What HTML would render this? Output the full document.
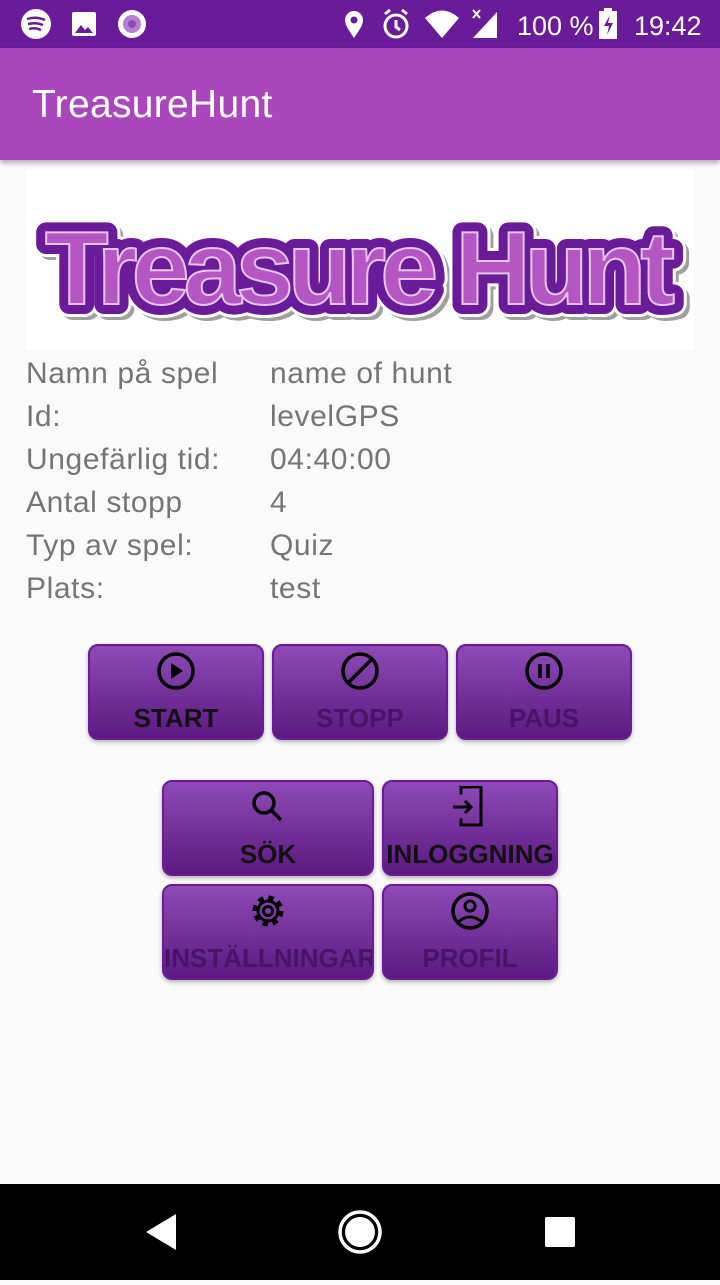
<!DOCTYPE html>
<html><head><meta charset="utf-8"><style>
*{margin:0;padding:0;box-sizing:border-box}
body{width:720px;height:1280px;background:#fafafa;font-family:"Liberation Sans",sans-serif;position:relative;overflow:hidden}
.sb{position:absolute;top:0;left:0;width:720px;height:48px;background:#6a1b9a;color:#fff}
.ab{position:absolute;top:48px;left:0;width:720px;height:112px;background:#ab47bc;box-shadow:0 3px 5px rgba(0,0,0,.3)}
.ab span{position:absolute;left:32px;top:35px;font-size:39px;color:#fff;letter-spacing:0.3px}
.logo{position:absolute;left:26px;top:170px;width:668px;height:180px;background:#fff}
.info{position:absolute;left:26px;top:352px;font-size:30px;color:#757575;line-height:43px;letter-spacing:0.6px;white-space:nowrap}
.info div{position:relative;height:43px}
.info .v{position:absolute;left:244px;top:0}
.btn{position:absolute;height:96px;border:2px solid #6a1b9a;border-radius:10px;background:linear-gradient(#8e4ab6,#5b1981);box-shadow:0 2px 4px rgba(0,0,0,.3);text-align:center;font-weight:bold;font-size:26px;overflow:hidden;white-space:nowrap}
.btn svg{position:absolute;left:50%;top:4px;margin-left:-21px}
.btn span{position:absolute;left:0;right:0;top:57px}
.dk{color:#111}.dm{color:#4a1466}
.nav{position:absolute;top:1184px;left:0;width:720px;height:96px;background:#000}
</style></head><body>
<div class="sb">
<svg width="720" height="48">
<circle cx="36" cy="24" r="15" fill="#fff"/><path d="M27 19q9-3 18 1M28 24q8-2 15 1M29 29q6-2 12 1" stroke="#6a1b9a" stroke-width="2.5" fill="none"/>
<rect x="72" y="12" width="24" height="24" rx="2" fill="#fff"/><path d="M75 33l6-8 4 5 3-3 5 6z" fill="#6a1b9a"/>
<circle cx="132" cy="24" r="14" fill="#fff"/><circle cx="132" cy="24" r="9" fill="#b07fd0"/><circle cx="132" cy="24" r="4" fill="#8a4bb5"/>
<path d="M354 38c-6-9-9-13-9-18a9 9 0 0 1 18 0c0 5-3 9-9 18z" fill="#fff"/><circle cx="354" cy="20" r="3.5" fill="#6a1b9a"/>
<circle cx="396" cy="26" r="11" stroke="#fff" stroke-width="3" fill="none"/><path d="M396 20v7l4 3M385 14l5-4M407 14l-5-4" stroke="#fff" stroke-width="3" fill="none"/>
<path d="M425 18q17-15 34 0l-17 20z" fill="#fff"/>
<path d="M473 38l24-26v26z" fill="#fff"/><path d="M473 10l7 8M480 10l-7 8" stroke="#fff" stroke-width="2"/>
<text x="517" y="35" font-size="27" fill="#fff" font-family="Liberation Sans">100 %</text>
<rect x="599" y="11" width="18" height="28" fill="#fff"/><rect x="604" y="8" width="8" height="4" fill="#fff"/><path d="M610 15l-6 11h5l-2 9 6-12h-5z" fill="#6a1b9a"/>
<text x="634" y="35" font-size="27" fill="#fff" font-family="Liberation Sans">19:42</text>
</svg></div>
<div class="ab"><span>TreasureHunt</span></div>
<div class="logo"><svg width="668" height="180">
<text x="334" y="134" text-anchor="middle" font-family="Liberation Sans" font-weight="bold" font-size="104" fill="#444" stroke="#444" stroke-width="24" stroke-linejoin="round" textLength="630" opacity=".5" transform="translate(4,4)">Treasure Hunt</text>
<text x="334" y="134" text-anchor="middle" font-family="Liberation Sans" font-weight="bold" font-size="104" fill="#fff" stroke="#fff" stroke-width="26" stroke-linejoin="round" textLength="630">Treasure Hunt</text>
<text x="334" y="134" text-anchor="middle" font-family="Liberation Sans" font-weight="bold" font-size="104" fill="#6a1b9a" stroke="#6a1b9a" stroke-width="20" stroke-linejoin="round" textLength="630">Treasure Hunt</text>
<text x="334" y="134" text-anchor="middle" font-family="Liberation Sans" font-weight="bold" font-size="104" fill="#b456c4" stroke="#e6c4ec" stroke-width="2" textLength="630">Treasure Hunt</text>
</svg></div>
<div class="info">
<div>Namn på spel<span class="v">name of hunt</span></div>
<div>Id:<span class="v">levelGPS</span></div>
<div>Ungefärlig tid:<span class="v">04:40:00</span></div>
<div>Antal stopp<span class="v">4</span></div>
<div>Typ av spel:<span class="v">Quiz</span></div>
<div>Plats:<span class="v">test</span></div>
</div>
<div class="btn dk" style="left:88px;top:644px;width:176px"><svg width="42" height="42"><circle cx="21" cy="21" r="17" stroke="#000" stroke-width="3.5" fill="none"/><path d="M16 13v16l12-8z"/></svg><span>START</span></div>
<div class="btn dm" style="left:272px;top:644px;width:176px"><svg width="42" height="42"><circle cx="21" cy="21" r="17" stroke="#000" stroke-width="3.5" fill="none"/><path d="M9 33L33 9" stroke="#000" stroke-width="3.5"/></svg><span>STOPP</span></div>
<div class="btn dm" style="left:456px;top:644px;width:176px"><svg width="42" height="42"><circle cx="21" cy="21" r="17" stroke="#000" stroke-width="3.5" fill="none"/><path d="M17 14v14M25 14v14" stroke="#000" stroke-width="3.5"/></svg><span>PAUS</span></div>
<div class="btn dk" style="left:162px;top:780px;width:212px"><svg width="42" height="42"><circle cx="17" cy="17" r="10" stroke="#000" stroke-width="3.5" fill="none"/><path d="M24 24l10 10" stroke="#000" stroke-width="3.5"/></svg><span>SÖK</span></div>
<div class="btn dk" style="left:382px;top:780px;width:176px"><svg width="42" height="42"><path d="M12 10V2h20v40H12v-7" stroke="#000" stroke-width="3" fill="none" transform="translate(0,-1) scale(1,0.95)"/><path d="M4 21h18M16 15l6 6-6 6" stroke="#000" stroke-width="3" fill="none"/></svg><span>INLOGGNING</span></div>
<div class="btn dm" style="left:162px;top:884px;width:212px"><svg width="42" height="42"><circle cx="21" cy="21" r="12" stroke="#000" stroke-width="7" stroke-dasharray="5 4.4" fill="none"/><circle cx="21" cy="21" r="10" stroke="#000" stroke-width="3" fill="none"/><circle cx="21" cy="21" r="4.5" stroke="#000" stroke-width="3" fill="none"/></svg><span>INSTÄLLNINGAR</span></div>
<div class="btn dm" style="left:382px;top:884px;width:176px"><svg width="42" height="42"><circle cx="21" cy="21" r="17" stroke="#000" stroke-width="3.5" fill="none"/><circle cx="21" cy="16" r="5" stroke="#000" stroke-width="3" fill="none"/><path d="M9 32q12-10 24 0" stroke="#000" stroke-width="3" fill="none"/></svg><span>PROFIL</span></div>
<div class="nav"><svg width="720" height="96">
<path d="M176 30v36l-30-18z" fill="#fff"/>
<circle cx="360" cy="48" r="20" stroke="#fff" stroke-width="3.5" fill="none"/><circle cx="360" cy="48" r="15" fill="#fff"/>
<rect x="545" y="33" width="30" height="30" rx="2" fill="#fff"/>
</svg></div>
</body></html>
